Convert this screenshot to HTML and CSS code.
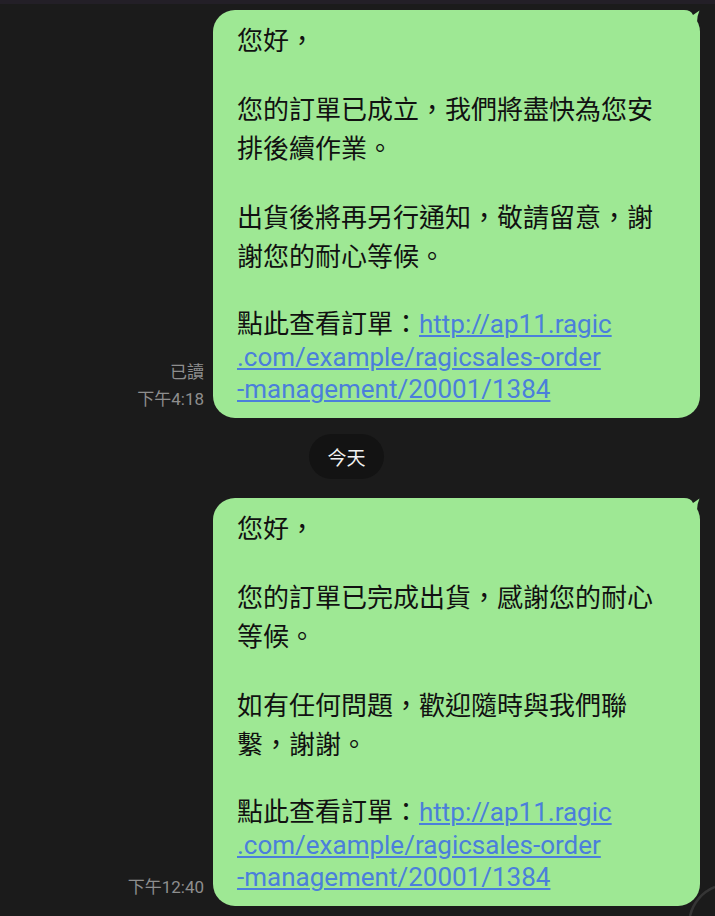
FILE: index.html
```html
<!DOCTYPE html>
<html lang="zh-Hant">
<head>
<meta charset="utf-8">
<title>LINE chat</title>
<link rel="stylesheet" href="styles.css">
</head>
<body>
<div class="topbar"></div>
<main class="chat">
  <div class="row">
    <div class="meta">
      <div>已讀</div>
      <div>下午4:18</div>
    </div>
    <div class="bubble">
      <svg class="tail" width="24" height="26" viewBox="0 0 24 26"><path d="M0 0 L8 0 Q15 0 17 5 Q20 3 23.5 0.5 Q21 6 21 12 Q21 18 24 22 L24 26 L0 26 Z"/></svg>
      <div class="text">
        <div class="ln">您好，</div>
        <div class="gap"></div>
        <div class="ln">您的訂單已成立，我們將盡快為您安</div>
        <div class="ln">排後續作業。</div>
        <div class="gap"></div>
        <div class="ln">出貨後將再另行通知，敬請留意，謝</div>
        <div class="ln">謝您的耐心等候。</div>
        <div class="gap"></div>
        <div class="ln mix">點此查看訂單：<a class="link" href="#">http://ap11.ragic</a></div>
        <div class="url"><a class="link" href="#">.com/example/ragicsales-order</a></div>
        <div class="url"><a class="link" href="#">-management/20001/1384</a></div>
      </div>
    </div>
  </div>

  <div class="date"><span class="pill">今天</span></div>

  <div class="row">
    <div class="meta">
      <div>下午12:40</div>
    </div>
    <div class="bubble">
      <svg class="tail" width="24" height="26" viewBox="0 0 24 26"><path d="M0 0 L8 0 Q15 0 17 5 Q20 3 23.5 0.5 Q21 6 21 12 Q21 18 24 22 L24 26 L0 26 Z"/></svg>
      <div class="text">
        <div class="ln">您好，</div>
        <div class="gap"></div>
        <div class="ln">您的訂單已完成出貨，感謝您的耐心</div>
        <div class="ln">等候。</div>
        <div class="gap"></div>
        <div class="ln">如有任何問題，歡迎隨時與我們聯</div>
        <div class="ln">繫，謝謝。</div>
        <div class="gap"></div>
        <div class="ln mix">點此查看訂單：<a class="link" href="#">http://ap11.ragic</a></div>
        <div class="url"><a class="link" href="#">.com/example/ragicsales-order</a></div>
        <div class="url"><a class="link" href="#">-management/20001/1384</a></div>
      </div>
    </div>
  </div>
</main>
<svg class="fab" width="27" height="32" viewBox="0 0 27 32"><path d="M27 3 A41 41 0 0 0 2 32" fill="none" stroke="#353535" stroke-width="2.5"/></svg>
</body>
</html>
```

FILE: styles.css
```css
html, body {
  margin: 0;
  padding: 0;
  background: #1b1b1b;
  height: 100%;
  overflow: hidden;
}
body {
  font-family: Roboto, "Noto Sans CJK TC", sans-serif;
  position: relative;
}
.topbar {
  height: 4px;
  background: #231f27;
}
.chat {
  padding: 6px 15px 0 0;
}
.row {
  display: flex;
  justify-content: flex-end;
  align-items: flex-end;
  gap: 9px;
}
.meta {
  color: #8e8e8e;
  font-size: 17px;
  line-height: 27px;
  text-align: right;
  margin-bottom: 5px;
}
.bubble {
  position: relative;
  width: 487px;
  box-sizing: border-box;
  background: #9ee894;
  border-radius: 22px;
  padding: 12px 10px 13px 24px;
}
.tail {
  position: absolute;
  top: 0;
  right: 0;
  fill: #9ee894;
}
.text {
  font-size: 26px;
  color: #111;
  white-space: nowrap;
}
.ln {
  height: 39px;
  line-height: 39px;
}
.ln.mix {
  height: 35px;
  line-height: 35px;
}
.gap {
  height: 30px;
}
.url {
  height: 31.5px;
  line-height: 31.5px;
}
.link {
  color: #4b7fdb;
  text-decoration: underline;
  text-decoration-thickness: 1.5px;
  text-underline-offset: 2px;
}
.date {
  display: flex;
  justify-content: center;
  padding: 16px 0 19px 0;
  margin-left: -7px;
}
.pill {
  display: flex;
  align-items: center;
  justify-content: center;
  width: 75px;
  height: 45px;
  border-radius: 23px;
  background: #131313;
  color: #f2f2f2;
  font-size: 19px;
}
.fab {
  position: absolute;
  left: 688px;
  top: 884px;
}
```
